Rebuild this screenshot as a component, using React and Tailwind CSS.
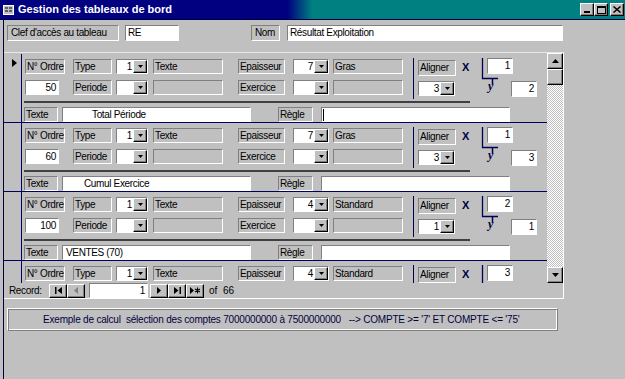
import React from "react";

const SUNK = "border border-t-[#808080] border-l-[#808080] border-b-white border-r-white";
const RAISED =
  "border border-t-white border-l-white border-b-black border-r-black shadow-[inset_-1px_-1px_0_#808080]";

const STATUS =
  "Exemple de calcul  sélection des comptes 7000000000 à 7500000000   --> COMPTE >= '7' ET COMPTE <= '75'";

const records = [
  { ordre: "50", ep: "7", epTxt: "Gras", align: "3", x: "1", y: "2", texte: "Total Période", indent: "pl-[29px]", cursor: true, current: true },
  { ordre: "60", ep: "7", epTxt: "Gras", align: "3", x: "1", y: "3", texte: "Cumul Exercice", indent: "pl-[21px]" },
  { ordre: "100", ep: "4", epTxt: "Standard", align: "1", x: "2", y: "1", texte: "VENTES (70)", indent: "pl-[3px]" },
  { ordre: "", ep: "4", epTxt: "Standard", align: "", x: "3", y: "", texte: "", indent: "pl-[3px]" },
];

function Label({ w, className = "", children }) {
  return (
    <div className={`flex h-[15px] shrink-0 items-center overflow-hidden whitespace-nowrap bg-[#c0c0c0] pl-[1px] leading-[12px] ${SUNK} ${w} ${className}`}>
      {children}
    </div>
  );
}

function Field({ w, className = "", children }) {
  return (
    <div className={`flex h-[15px] shrink-0 items-center overflow-hidden whitespace-nowrap bg-white leading-[12px] ${SUNK} ${w} ${className}`}>
      {children}
    </div>
  );
}

function DropBtn() {
  return (
    <div className={`flex w-[14px] shrink-0 items-center justify-center bg-[#c0c0c0] ${RAISED}`}>
      <svg width="5" height="3" viewBox="0 0 5 3">
        <path d="M0 0h5L2.5 3z" fill="#000" />
      </svg>
    </div>
  );
}

function Combo({ w, value, className = "" }) {
  return (
    <div className={`flex h-[15px] shrink-0 bg-white ${SUNK} ${w} ${className}`}>
      <div className="flex flex-1 items-center justify-end pr-[1px] leading-[12px]">{value}</div>
      <DropBtn />
    </div>
  );
}

function Record({ r }) {
  return (
    <div className="flex h-[69px] shrink-0 border-b border-[#000060]">
      <div className="w-[18px] shrink-0 border-r border-[#000060] pl-[8px] pt-[5px]">
        {r.current && (
          <svg width="5" height="8" viewBox="0 0 5 8">
            <path d="M0 0l5 4-5 4z" fill="#000" />
          </svg>
        )}
      </div>
      <div className="flex flex-col">
        <div className="flex h-[47px]">
          <div className="flex flex-col gap-[6px] pl-[3px] pt-[5px]">
            <div className="flex">
              <Label w="w-[40px]">N° Ordre</Label>
              <Label w="w-[39px]" className="ml-[8px]">Type</Label>
              <Combo w="w-[32px]" className="ml-[4px]" value="1" />
              <Label w="w-[70px]" className="ml-[5px]">Texte</Label>
              <Label w="w-[47px]" className="ml-[15px]">Epaisseur</Label>
              <Combo w="w-[36px]" className="ml-[8px]" value={r.ep} />
              <Label w="w-[70px]" className="ml-[4px]">{r.epTxt}</Label>
            </div>
            <div className="flex">
              <Field w="w-[34px]" className="justify-end pr-[2px]">{r.ordre}</Field>
              <Label w="w-[39px]" className="ml-[14px]">Periode</Label>
              <Combo w="w-[32px]" className="ml-[4px]" value="" />
              <Label w="w-[70px]" className="ml-[5px]" />
              <Label w="w-[47px]" className="ml-[15px]">Exercice</Label>
              <Combo w="w-[36px]" className="ml-[8px]" value="" />
              <Label w="w-[70px]" className="ml-[4px]" />
            </div>
          </div>
          <div className="ml-[10px] mt-[4px] h-[41px] w-px bg-[#000050]" />
          <div className="ml-[4px] flex flex-col gap-[5px] pt-[6px]">
            <Label w="w-[38px]" className="h-[16px]">Aligner</Label>
            <Combo w="w-[37px]" value={r.align} />
          </div>
          <div className="ml-[6px] w-[8px] pt-[7px] text-[11px] font-bold leading-[12px] text-[#000040]">X</div>
          <div className="relative ml-[10px] h-[45px] w-[58px]">
            <svg className="absolute left-0 top-0" width="30" height="45" viewBox="0 0 30 45">
              <path d="M2.5 4v20.5H18" stroke="#000050" strokeWidth="1.3" fill="none" />
              <path d="M12.5 24.5v6" stroke="#000050" strokeWidth="1.5" />
            </svg>
            <span className="absolute left-[8px] top-[26px] font-['Liberation_Serif',serif] text-[12px] font-bold italic leading-[12px] text-[#000040]">
              y
            </span>
            <Field w="w-[26px]" className="absolute left-[7px] top-[4px] h-[16px] justify-end pr-[2px]">
              {r.x}
            </Field>
            <Field w="w-[26px]" className="absolute left-[31px] top-[27px] h-[16px] justify-end pr-[2px]">
              {r.y}
            </Field>
          </div>
        </div>
        <div className="ml-[2px] h-[2px] w-[446px] bg-[#404040]" />
        <div className="mt-[4px] flex">
          <Label w="w-[34px]" className="ml-[2px]">Texte</Label>
          <Field w="w-[189px]" className={`ml-[4px] ${r.indent}`}>{r.texte}</Field>
          <Label w="w-[35px]" className="ml-[27px]">Règle</Label>
          <Field w="w-[189px]" className="ml-[8px] pl-[1px]">
            {r.cursor && <div className="h-[12px] w-px bg-black" />}
          </Field>
        </div>
      </div>
    </div>
  );
}

function NavBtn({ children, className = "" }) {
  return (
    <div className={`flex h-[14px] w-[18px] items-center justify-center bg-[#c0c0c0] ${RAISED} ${className}`}>
      {children}
    </div>
  );
}

export default function App() {
  return (
    <div className="h-[379px] w-[625px] overflow-hidden whitespace-nowrap bg-[#c0c0c0] font-['Liberation_Sans',Arial,sans-serif] text-[10px] tracking-[-0.35px] text-black">
      <div className="flex h-[19px] items-center bg-[linear-gradient(90deg,#000080_0%,#000080_46%,#008080_50%,#008080_100%)] pl-[3px] pr-[1px]">
        <svg width="11" height="10" viewBox="0 0 11 10">
          <rect x="0.5" y="0.5" width="10" height="9" fill="#c0c0c0" stroke="#fff" />
          <path d="M2 3h3M2 6h3M6 3h3M6 6h3" stroke="#000" />
        </svg>
        <span className="ml-[4px] text-[11px] font-bold tracking-normal text-white">Gestion des tableaux de bord</span>
        <div className="ml-auto flex items-center">
          <div className={`flex h-[13px] w-[14px] items-end justify-center bg-[#c0c0c0] pb-[2px] ${RAISED}`}>
            <div className="h-[2px] w-[6px] bg-black" />
          </div>
          <div className={`flex h-[13px] w-[14px] items-center justify-center bg-[#c0c0c0] ${RAISED}`}>
            <div className="h-[8px] w-[9px] border border-t-2 border-black" />
          </div>
          <div className={`ml-[2px] flex h-[13px] w-[14px] items-center justify-center bg-[#c0c0c0] ${RAISED}`}>
            <svg width="8" height="7" viewBox="0 0 8 7">
              <path d="M0.5 0.5l7 6M7.5 0.5l-7 6" stroke="#000" strokeWidth="1.5" />
            </svg>
          </div>
        </div>
      </div>
      <div className="flex h-[360px] border-t border-[#000040]">
        <div className="w-[3px] shrink-0" />
        <div className="flex flex-1 flex-col border-l border-[#000040]">
          <div className="mt-[5px] flex items-center">
            <Label w="w-[112px]" className="ml-[3px] h-[16px] pl-[3px]">Clef d'accès au tableau</Label>
            <Field w="w-[54px]" className="ml-[6px] h-[16px] pl-[2px]">RE</Field>
            <Label w="w-[29px]" className="ml-[72px] h-[16px] pl-[3px]">Nom</Label>
            <Field w="w-[276px]" className="ml-[7px] h-[16px] pl-[2px]">Résultat Exploitation</Field>
          </div>

          <div className="mt-[11px] flex w-[560px] flex-col border-t border-r border-b border-t-[#e8e8e8] border-r-white border-b-white">
            <div className="flex h-[230px]">
              <div className="flex w-[543px] flex-col overflow-hidden pt-[1px]">
                {records.map((r, i) => (
                  <Record key={i} r={r} />
                ))}
              </div>
              <div className="flex w-[16px] flex-col">
                <div className={`flex h-[16px] items-center justify-center bg-[#c0c0c0] ${RAISED}`}>
                  <svg width="7" height="4" viewBox="0 0 7 4">
                    <path d="M0 4h7L3.5 0z" fill="#000" />
                  </svg>
                </div>
                <div className={`h-[16px] bg-[#c0c0c0] ${RAISED}`} />
                <div className="flex-1 bg-[repeating-conic-gradient(#ffffff_0%_25%,#c0c0c0_0%_50%)] bg-size-[2px_2px]" />
                <div className={`flex h-[16px] items-center justify-center bg-[#c0c0c0] ${RAISED}`}>
                  <svg width="7" height="4" viewBox="0 0 7 4">
                    <path d="M0 0h7L3.5 4z" fill="#000" />
                  </svg>
                </div>
              </div>
            </div>
            <div className="flex h-[15px] items-center pl-[5px]">
              <span className="w-[40px]">Record:</span>
              <NavBtn>
                <svg width="7" height="7" viewBox="0 0 7 7">
                  <path d="M0 0h1.5v7H0zM7 0v7L2.5 3.5z" fill="#000" />
                </svg>
              </NavBtn>
              <NavBtn>
                <svg width="5" height="7" viewBox="0 0 5 7">
                  <path d="M4 0v7L0 3.5z" fill="#808080" />
                </svg>
              </NavBtn>
              <Field w="w-[59px]" className="ml-[4px] h-[14px] justify-end pr-[2px]">1</Field>
              <NavBtn className="ml-[2px]">
                <svg width="5" height="7" viewBox="0 0 5 7">
                  <path d="M0 0v7l4-3.5z" fill="#000" />
                </svg>
              </NavBtn>
              <NavBtn>
                <svg width="7" height="7" viewBox="0 0 7 7">
                  <path d="M0 0v7l4.5-3.5zM5.5 0H7v7H5.5z" fill="#000" />
                </svg>
              </NavBtn>
              <NavBtn>
                <svg width="10" height="7" viewBox="0 0 10 7">
                  <path d="M0 0v7l4-3.5z" fill="#000" />
                  <path d="M7.5 0.5v6M5 2l5 3M10 2L5 5" stroke="#000" strokeWidth="1.1" />
                </svg>
              </NavBtn>
              <span className="ml-[5px] tracking-normal">of&nbsp;&nbsp;66</span>
            </div>
          </div>

          <div className="ml-[3px] mt-[9px] flex h-[23px] w-[551px] items-center border border-t-white border-l-white border-b-[#808080] border-r-[#808080] pl-[35px] text-[#000040] shadow-[inset_1px_1px_0_#808080,inset_-1px_-1px_0_#fff]">
            <span className="whitespace-pre tracking-[-0.2px]">{STATUS}</span>
          </div>
        </div>
      </div>
    </div>
  );
}
